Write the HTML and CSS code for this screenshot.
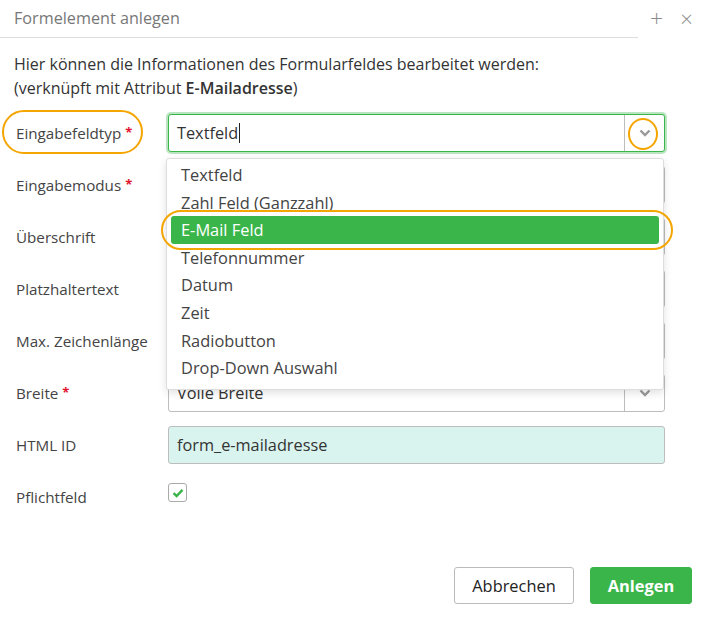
FILE: index.html
```html
<!DOCTYPE html>
<html lang="de">
<head>
<meta charset="utf-8">
<title>Formelement anlegen</title>
<link rel="stylesheet" href="styles.css">
</head>
<body>
<div class="modal">
  <div class="header">
    <div class="title">Formelement anlegen</div>
    <div class="tools"><span class="tool plus">+</span><span class="tool close">×</span></div>
  </div>
  <div class="body">
    <p class="desc">Hier können die Informationen des Formularfeldes bearbeitet werden:<br>(verknüpft mit Attribut <b>E-Mailadresse</b>)</p>
    <div class="form">
      <div class="label hl-label"><span>Eingabefeldtyp</span><span class="req">*</span><span class="ring-label"></span></div>
      <div class="field">
        <div class="select focus"><span class="value">Textfeld<span class="caret"></span></span><span class="arrow"><svg viewBox="0 0 12 8" width="12" height="8"><path d="M1.5 1.5 L6 6 L10.5 1.5" fill="none" stroke="#9a9a9a" stroke-width="2.4"/></svg></span><span class="ring-arrow"></span></div>
        <ul class="menu">
          <li>Textfeld</li>
          <li>Zahl Feld (Ganzzahl)</li>
          <li class="active">E-Mail Feld<span class="ring-item"></span></li>
          <li>Telefonnummer</li>
          <li>Datum</li>
          <li>Zeit</li>
          <li>Radiobutton</li>
          <li>Drop-Down Auswahl</li>
        </ul>
      </div>

      <div class="label">Eingabemodus<span class="req">*</span></div>
      <div class="field"><div class="select"></div></div>

      <div class="label">Überschrift</div>
      <div class="field"><div class="input"></div></div>

      <div class="label">Platzhaltertext</div>
      <div class="field"><div class="input"></div></div>

      <div class="label">Max. Zeichenlänge</div>
      <div class="field"><div class="input"></div></div>

      <div class="label">Breite<span class="req">*</span></div>
      <div class="field"><div class="select"><span class="value">Volle Breite</span><span class="arrow"><svg viewBox="0 0 12 8" width="12" height="8"><path d="M1.5 1.5 L6 6 L10.5 1.5" fill="none" stroke="#9a9a9a" stroke-width="2.4"/></svg></span></div></div>

      <div class="label">HTML ID</div>
      <div class="field"><div class="input readonly"><span class="value">form_e-mailadresse</span></div></div>

      <div class="label">Pflichtfeld</div>
      <div class="field"><span class="checkbox"><svg viewBox="0 0 12 10" width="12" height="10"><path d="M1.5 5.2 L4.6 8 L10.5 1.8" fill="none" stroke="#3ab54a" stroke-width="2.4"/></svg></span></div>
    </div>
  </div>
  <div class="footer">
    <button class="btn cancel">Abbrechen</button>
    <button class="btn primary">Anlegen</button>
  </div>
</div>
</body>
</html>
```
FILE: styles.css
```css
* { box-sizing: border-box; }
html, body { margin: 0; padding: 0; background: #fff; }
body {
  font-family: "Open Sans", "Noto Sans", sans-serif;
  color: #333;
  width: 703px;
  height: 618px;
  overflow: hidden;
}
.modal { position: relative; width: 703px; height: 618px; }
.header { display: flex; height: 38px; }
.title {
  flex: 0 0 638px;
  border-bottom: 1px solid #ddd;
  padding-left: 14px;
  line-height: 36px;
  font-size: 16.2px;
  color: #777;
}
.tools { display: flex; align-items: center; gap: 17px; padding-left: 12px; height: 36px; }
.tool { color: #8a8a8a; font-size: 23px; line-height: 1; font-weight: 300; }
.tool.close { font-size: 22px; }
.body { padding: 0 14px; }
.desc {
  margin: 14px 0 14px;
  font-size: 16px;
  line-height: 24px;
  color: #333;
  white-space: nowrap;
}
.desc b { font-weight: 600; }
.form {
  display: grid;
  grid-template-columns: 154px 497px;
  grid-auto-rows: 38px;
  row-gap: 14px;
}
.label {
  position: relative;
  display: flex;
  align-items: center;
  font-size: 15.2px;
  color: #444;
  padding-left: 2px;
  white-space: nowrap;
}
.req { color: #e2132d; margin-left: 4px; font-weight: 700; font-size: 13px; align-self: flex-start; margin-top: 9px; }
.field { position: relative; }
.select, .input {
  position: relative;
  display: flex;
  align-items: center;
  height: 38px;
  border: 1px solid #bdbdbd;
  border-radius: 3px;
  background: #fff;
}
.select.focus {
  border-color: #3ab54a;
  box-shadow: 0 0 0 2px rgba(58, 181, 74, 0.35);
}
.value { flex: 1; padding-left: 8px; font-size: 16.3px; color: #333; display: flex; align-items: center; }
.caret { display: inline-block; width: 1px; height: 20px; background: #222; margin-left: 1px; }
.arrow {
  width: 40px;
  height: 100%;
  margin-left: auto;
  border-left: 1px solid #bdbdbd;
  display: flex;
  align-items: center;
  justify-content: center;
}
.input.readonly { background: #d9f3ef; }
.checkbox {
  display: inline-flex;
  align-items: center;
  justify-content: center;
  width: 19px;
  height: 19px;
  margin-top: 5px;
  border: 1px solid #aaa;
  border-radius: 3px;
  background: #fff;
}
.menu {
  position: absolute;
  z-index: 5;
  top: 44px;
  left: -2px;
  width: 498px;
  margin: 0;
  padding: 2px 0 7px;
  list-style: none;
  background: #fff;
  border: 1px solid #ddd;
  border-radius: 3px;
  box-shadow: 0 3px 8px rgba(0, 0, 0, 0.12);
}
.menu li {
  position: relative;
  height: 27.6px;
  line-height: 27.6px;
  padding-left: 10px;
  font-size: 16.4px;
  color: #444;
  margin: 0 4px;
  white-space: nowrap;
}
.menu li.active {
  background: #3ab54a;
  color: #fff;
  border-radius: 3px;
  padding-left: 10px;
}
.ring-label, .ring-arrow, .ring-item {
  position: absolute;
  border: 2.5px solid #f5a500;
  pointer-events: none;
}
.ring-label { left: -12px; top: -4px; width: 141px; height: 44px; border-radius: 22px; }
.ring-arrow { right: 6px; top: 3px; width: 30px; height: 32px; border-radius: 50%; }
.ring-item { left: -10px; top: -6px; width: 512px; height: 40px; border-radius: 20px; }
.footer {
  position: absolute;
  right: 11px;
  bottom: 14px;
  display: flex;
  gap: 16px;
}
.btn {
  font-family: inherit;
  height: 37px;
  border-radius: 3px;
  font-size: 16.4px;
  cursor: pointer;
}
.btn.cancel { width: 120px; background: #fff; border: 1px solid #bbb; color: #222; }
.btn.primary { width: 102px; background: #3ab54a; border: 1px solid #3ab54a; color: #fff; font-weight: 700; }
```
